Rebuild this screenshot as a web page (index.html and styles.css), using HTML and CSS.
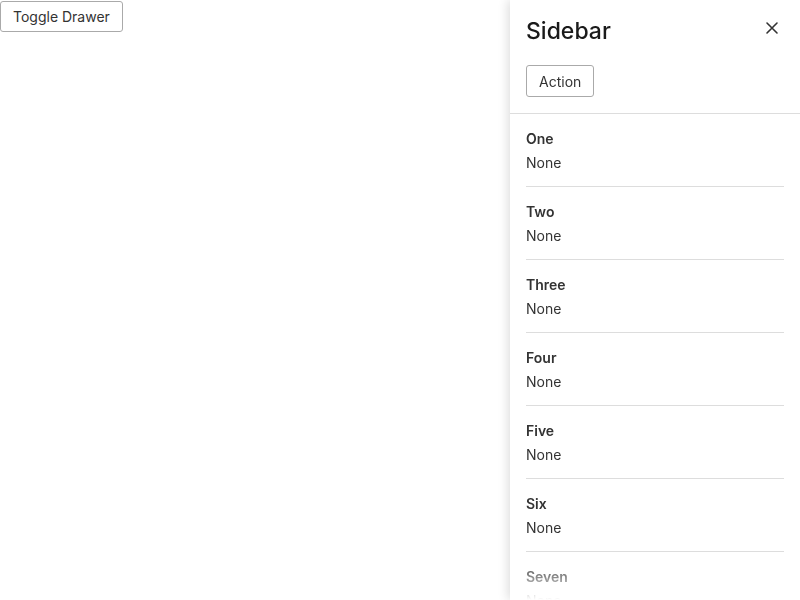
FILE: index.html
```html
<!DOCTYPE html>
<html>
<head>
<meta charset="utf-8">
<link rel="stylesheet" href="styles.css">
</head>
<body>
<button class="btn toggle">Toggle Drawer</button>
<aside class="drawer">
  <header class="drawer-header">
    <div class="header-main">
      <h1 class="title">Sidebar</h1>
      <button class="btn action">Action</button>
    </div>
    <button class="close" aria-label="Close">
      <svg width="14" height="14" viewBox="0 0 14 14"><path d="M2 2L12 12M12 2L2 12" stroke="#333" stroke-width="1.6" stroke-linecap="round"/></svg>
    </button>
  </header>
  <div class="list">
    <div class="item"><div class="label">One</div><div class="value">None</div></div>
    <div class="item"><div class="label">Two</div><div class="value">None</div></div>
    <div class="item"><div class="label">Three</div><div class="value">None</div></div>
    <div class="item"><div class="label">Four</div><div class="value">None</div></div>
    <div class="item"><div class="label">Five</div><div class="value">None</div></div>
    <div class="item"><div class="label">Six</div><div class="value">None</div></div>
    <div class="item"><div class="label">Seven</div><div class="value">None</div></div>
    <div class="item"><div class="label">Eight</div><div class="value">None</div></div>
  </div>
</aside>
</body>
</html>
```
FILE: styles.css
```css
html, body {
  margin: 0;
  padding: 0;
  background: #fff;
  font-family: Inter, "Noto Sans", sans-serif;
  color: #333;
}
body {
  padding-top: 1px;
}
.btn {
  font-family: Inter, sans-serif;
  font-size: 14px;
  color: #333;
  background: #fff;
  border: 1px solid #aaa;
  border-radius: 3px;
  padding: 0 12px;
  height: 31px;
  line-height: 29px;
  margin: 0;
}
.toggle {
  display: block;
}
.drawer {
  position: fixed;
  top: 0;
  right: 0;
  width: 290px;
  height: 100vh;
  background: #fff;
  box-shadow: -2px 0 10px rgba(0,0,0,0.14);
  display: flex;
  flex-direction: column;
  overflow: hidden;
}
.drawer-header {
  display: flex;
  justify-content: space-between;
  align-items: flex-start;
  padding: 16px 16px 16px 16px;
  border-bottom: 1px solid #ddd;
}
.header-main {
  display: flex;
  flex-direction: column;
  align-items: flex-start;
  gap: 19px;
}
.title {
  margin: 0;
  font-size: 23px;
  font-weight: 500;
  line-height: 30px;
  color: #1a1a1a;
}
.action {
  height: 32px;
}
.close {
  width: 24px;
  height: 24px;
  padding: 0;
  border: none;
  background: transparent;
  display: flex;
  align-items: center;
  justify-content: center;
}
.list {
  flex: 1;
  padding: 0 16px;
  overflow: hidden;
  -webkit-mask-image: linear-gradient(to bottom, #000 calc(100% - 40px), transparent);
  mask-image: linear-gradient(to bottom, #000 calc(100% - 40px), transparent);
}
.item {
  padding: 13px 0 11px;
  border-bottom: 1px solid #ddd;
  font-size: 14px;
  line-height: 24px;
}
.label {
  font-weight: 600;
  color: #333;
}
.value {
  color: #333;
}
```
